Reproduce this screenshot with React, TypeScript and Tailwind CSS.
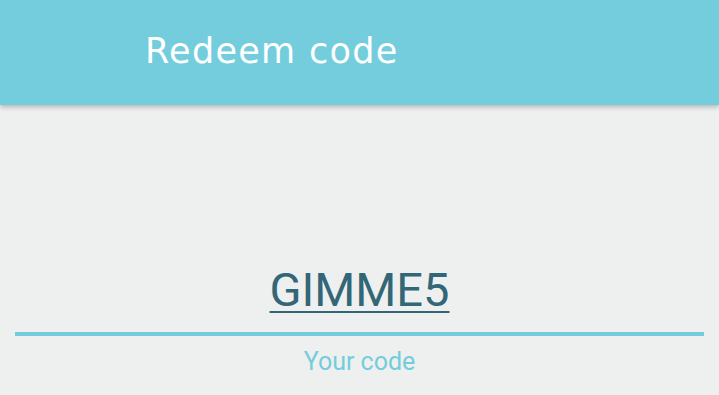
export default function App() {
  return (
    <div className="flex h-[395px] w-[719px] flex-col overflow-hidden bg-[#eef0ef]">
      <header className="relative z-10 flex h-[105px] shrink-0 items-center bg-[#73cddd] pl-[145px] shadow-[0_2px_5px_rgba(0,0,0,0.25)]">
        <h1 className="pb-[2px] font-['DejaVu_Sans',sans-serif] text-[35px] leading-none tracking-[1.3px] text-white">
          Redeem code
        </h1>
      </header>
      <main className="flex flex-1 flex-col px-[15px] pt-[157px]">
        <div className="flex justify-center">
          <span className="font-['Roboto',sans-serif] text-[47px] leading-[56px] text-[#336677] underline decoration-2 underline-offset-[5px]">
            GIMME5
          </span>
        </div>
        <div className="mt-[14px] h-[4px] w-full bg-[#73cddd]" />
        <div className="mt-[12px] text-center font-['Roboto',sans-serif] text-[25px] leading-[28px] text-[#73cddd]">
          Your code
        </div>
      </main>
    </div>
  );
}
